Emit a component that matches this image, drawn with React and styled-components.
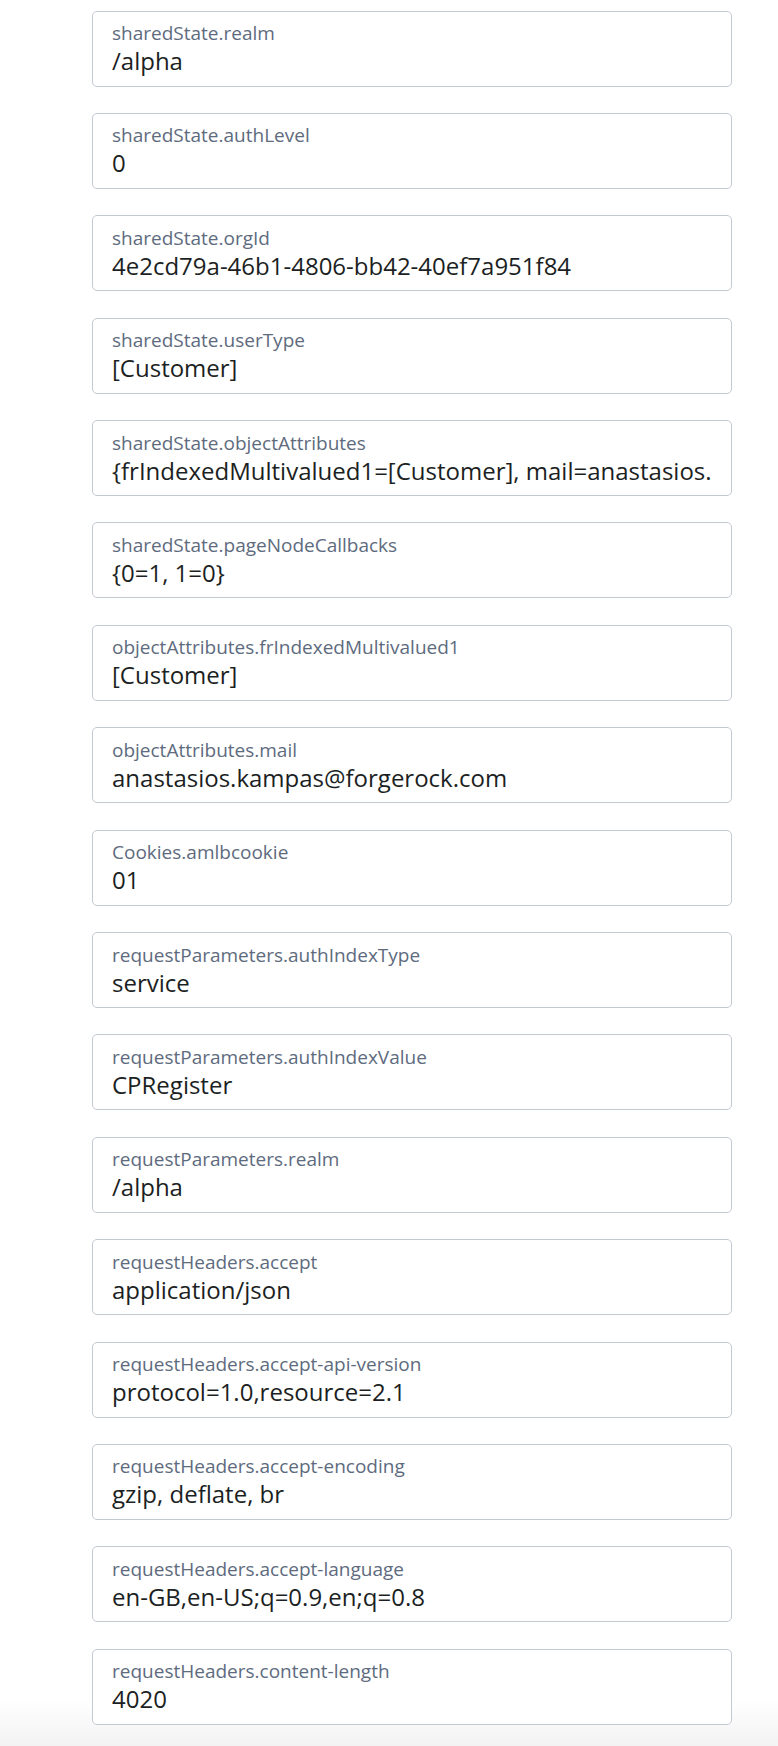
import React from "react";
import styled, { createGlobalStyle } from "styled-components";

const Global = createGlobalStyle`
  html, body { margin: 0; padding: 0; background: #fff; }
  body { font-family: "Open Sans", "Noto Sans", sans-serif; }
`;

const Page = styled.div`
  min-height: 1746px;
  box-sizing: border-box;
  padding: 10.5px 46px 20px 92px;
  background: linear-gradient(to bottom, #ffffff 0, #ffffff calc(100% - 48px), #f3f3f4 100%);
`;

const List = styled.div`
  display: flex;
  flex-direction: column;
  gap: 26.4px;
  width: 640px;
`;

const Field = styled.div`
  box-sizing: border-box;
  height: 76px;
  border: 1px solid #c3c9d3;
  border-radius: 5px;
  background: #fff;
  padding: 9.5px 19px 0 19px;
  overflow: hidden;
`;

const Label = styled.div`
  font-size: 19px;
  line-height: 24px;
  color: #5e6b7e;
  white-space: nowrap;
`;

const Value = styled.div`
  font-size: 24px;
  line-height: 31px;
  color: #1c1f23;
  white-space: nowrap;
  overflow: hidden;
`;

const fields = [
  ["sharedState.realm", "/alpha"],
  ["sharedState.authLevel", "0"],
  ["sharedState.orgId", "4e2cd79a-46b1-4806-bb42-40ef7a951f84"],
  ["sharedState.userType", "[Customer]"],
  ["sharedState.objectAttributes", "{frIndexedMultivalued1=[Customer], mail=anastasios.kampas@forgerock.com}"],
  ["sharedState.pageNodeCallbacks", "{0=1, 1=0}"],
  ["objectAttributes.frIndexedMultivalued1", "[Customer]"],
  ["objectAttributes.mail", "anastasios.kampas@forgerock.com"],
  ["Cookies.amlbcookie", "01"],
  ["requestParameters.authIndexType", "service"],
  ["requestParameters.authIndexValue", "CPRegister"],
  ["requestParameters.realm", "/alpha"],
  ["requestHeaders.accept", "application/json"],
  ["requestHeaders.accept-api-version", "protocol=1.0,resource=2.1"],
  ["requestHeaders.accept-encoding", "gzip, deflate, br"],
  ["requestHeaders.accept-language", "en-GB,en-US;q=0.9,en;q=0.8"],
  ["requestHeaders.content-length", "4020"],
];

export default function App() {
  return (
    <Page>
      <Global />
      <List>
        {fields.map(([label, value], i) => (
          <Field key={i}>
            <Label>{label}</Label>
            <Value>{value}</Value>
          </Field>
        ))}
      </List>
    </Page>
  );
}
